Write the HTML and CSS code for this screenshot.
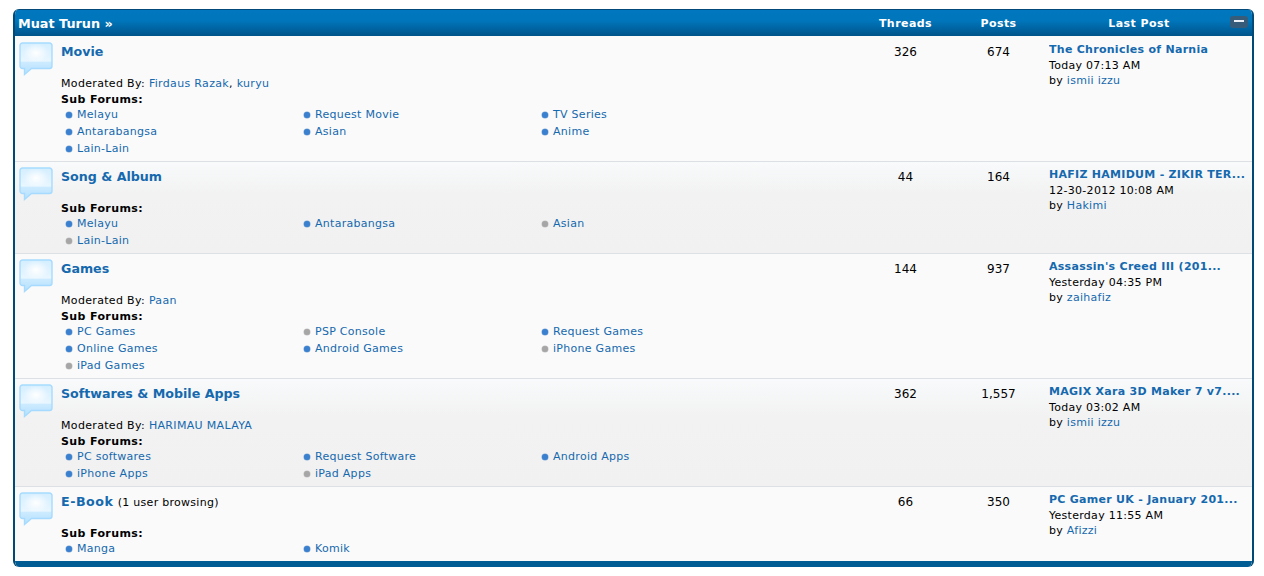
FILE: index.html
```html
<!DOCTYPE html>
<html lang="ms">
<head>
  <meta charset="UTF-8">
  <meta name="viewport" content="width=device-width, initial-scale=1">
  <title>Muat Turun</title>
  <link rel="stylesheet" href="styles.css">
</head>
<body>
  <svg class="defs" width="0" height="0" aria-hidden="true">
    <defs>
      <linearGradient id="bubbleFill" x1="0" y1="0" x2="0" y2="1">
        <stop offset="0" stop-color="#d4eeff"/>
        <stop offset="0.58" stop-color="#e9f6ff"/>
        <stop offset="0.6" stop-color="#cdebff"/>
        <stop offset="1" stop-color="#b4e0ff"/>
      </linearGradient>
      <radialGradient id="bubbleGlow" cx="0.5" cy="0.38" r="0.42">
        <stop offset="0" stop-color="#fff" stop-opacity="1"/>
        <stop offset="1" stop-color="#fff" stop-opacity="0"/>
      </radialGradient>
      <symbol id="bubble" viewBox="0 0 34 34">
        <path d="M3.500 1H30.500A2.500 2.500 0 0 1 33 3.500V24A2.500 2.500 0 0 1 30.500 26.500H12.500L5.500 32.500V26.500H3.500A2.500 2.500 0 0 1 1 24V3.500A2.500 2.500 0 0 1 3.500 1Z" fill="url(#bubbleFill)" stroke="#a6dbff" stroke-width="1.4"/>
        <rect x="2" y="2" width="30" height="23.500" fill="url(#bubbleGlow)"/>
      </symbol>
    </defs>
  </svg>

  <div class="forumbox">
    <div class="head">
      <div class="head-title">Muat Turun <span class="raquo">»</span></div>
      <div class="col-num">Threads</div>
      <div class="col-num">Posts</div>
      <div class="col-last">Last Post</div>
      <span class="collapse"></span>
    </div>

    <div class="row">
      <svg class="bubble"><use href="#bubble"/></svg>
      <div class="info">
        <h2 class="name"><a href="#">Movie</a></h2>
        <div class="mods">Moderated By: <a href="#">Firdaus Razak</a>, <a href="#">kuryu</a></div>
        <div class="sub-label">Sub Forums:</div>
        <ul class="subs">
          <li><a href="#">Melayu</a></li>
          <li><a href="#">Request Movie</a></li>
          <li><a href="#">TV Series</a></li>
          <li><a href="#">Antarabangsa</a></li>
          <li><a href="#">Asian</a></li>
          <li><a href="#">Anime</a></li>
          <li><a href="#">Lain-Lain</a></li>
        </ul>
      </div>
      <div class="num">326</div>
      <div class="num">674</div>
      <div class="last">
        <a class="last-title" href="#">The Chronicles of Narnia</a>
        <div>Today 07:13 AM</div>
        <div>by <a href="#">ismii izzu</a></div>
      </div>
    </div>

    <div class="row alt">
      <svg class="bubble"><use href="#bubble"/></svg>
      <div class="info">
        <h2 class="name"><a href="#">Song &amp; Album</a></h2>
        <div class="sub-label">Sub Forums:</div>
        <ul class="subs">
          <li><a href="#">Melayu</a></li>
          <li><a href="#">Antarabangsa</a></li>
          <li class="old"><a href="#">Asian</a></li>
          <li class="old"><a href="#">Lain-Lain</a></li>
        </ul>
      </div>
      <div class="num">44</div>
      <div class="num">164</div>
      <div class="last">
        <a class="last-title" href="#">HAFIZ HAMIDUM - ZIKIR TER...</a>
        <div>12-30-2012 10:08 AM</div>
        <div>by <a href="#">Hakimi</a></div>
      </div>
    </div>

    <div class="row">
      <svg class="bubble"><use href="#bubble"/></svg>
      <div class="info">
        <h2 class="name"><a href="#">Games</a></h2>
        <div class="mods">Moderated By: <a href="#">Paan</a></div>
        <div class="sub-label">Sub Forums:</div>
        <ul class="subs">
          <li><a href="#">PC Games</a></li>
          <li class="old"><a href="#">PSP Console</a></li>
          <li><a href="#">Request Games</a></li>
          <li><a href="#">Online Games</a></li>
          <li><a href="#">Android Games</a></li>
          <li class="old"><a href="#">iPhone Games</a></li>
          <li class="old"><a href="#">iPad Games</a></li>
        </ul>
      </div>
      <div class="num">144</div>
      <div class="num">937</div>
      <div class="last">
        <a class="last-title" href="#">Assassin's Creed III (201...</a>
        <div>Yesterday 04:35 PM</div>
        <div>by <a href="#">zaihafiz</a></div>
      </div>
    </div>

    <div class="row alt">
      <svg class="bubble"><use href="#bubble"/></svg>
      <div class="info">
        <h2 class="name"><a href="#">Softwares &amp; Mobile Apps</a></h2>
        <div class="mods">Moderated By: <a href="#">HARIMAU MALAYA</a></div>
        <div class="sub-label">Sub Forums:</div>
        <ul class="subs">
          <li><a href="#">PC softwares</a></li>
          <li><a href="#">Request Software</a></li>
          <li><a href="#">Android Apps</a></li>
          <li><a href="#">iPhone Apps</a></li>
          <li class="old"><a href="#">iPad Apps</a></li>
        </ul>
      </div>
      <div class="num">362</div>
      <div class="num">1,557</div>
      <div class="last">
        <a class="last-title" href="#">MAGIX Xara 3D Maker 7 v7....</a>
        <div>Today 03:02 AM</div>
        <div>by <a href="#">ismii izzu</a></div>
      </div>
    </div>

    <div class="row end">
      <svg class="bubble"><use href="#bubble"/></svg>
      <div class="info">
        <h2 class="name"><a class="wide" href="#">E-Book</a> <span class="browsing">(1 user browsing)</span></h2>
        <div class="sub-label">Sub Forums:</div>
        <ul class="subs">
          <li><a href="#">Manga</a></li>
          <li><a href="#">Komik</a></li>
        </ul>
      </div>
      <div class="num">66</div>
      <div class="num">350</div>
      <div class="last">
        <a class="last-title" href="#">PC Gamer UK - January 201...</a>
        <div>Yesterday 11:55 AM</div>
        <div>by <a href="#">Afizzi</a></div>
      </div>
    </div>
  </div>
</body>
</html>
```

FILE: styles.css
```css
body {
  margin: 0;
  padding: 9px 10px 0 13px;
  background: #fff;
  color: #000;
  font-family: "DejaVu Sans", Verdana, sans-serif;
  font-size: 11px;
  letter-spacing: .28px;
}
a {
  color: #1569ae;
  text-decoration: none;
}
.defs {
  display: block;
}
.forumbox {
  border: 2px solid #024a76;
  border-top: 0;
  border-bottom: 0;
  border-radius: 6px;
  background: #fafafa;
  overflow: hidden;
}
.head {
  display: grid;
  grid-template-columns: 1fr 93px 93px 207px;
  align-items: center;
  position: relative;
  height: 27px;
  margin-bottom: 1px;
  background: linear-gradient(#0077be, #0076bc 40%, #00548a);
  border-top: 1px solid #034a78;
  box-sizing: border-box;
  color: #fff;
  font-weight: bold;
  letter-spacing: .45px;
}
.head-title {
  padding-left: 3px;
  font-size: 12.8px;
  letter-spacing: 0;
}
.raquo {
  font-weight: bold;
}
.col-num {
  text-align: center;
}
.col-last {
  text-align: center;
  padding-right: 19px;
}
.collapse {
  position: absolute;
  top: 6px;
  right: 4px;
  width: 18px;
  height: 12px;
  border-radius: 3px;
  background: #375c79;
}
.collapse::after {
  content: "";
  position: absolute;
  left: 4px;
  top: 4px;
  width: 10px;
  height: 2px;
  background: #e8eef3;
}
.row {
  display: grid;
  grid-template-columns: 46px 1fr 93px 93px 207px;
  border-bottom: 1px solid #dde1e6;
  background: #fafafa;
}
.row.alt {
  background: linear-gradient(#f8fafb, #f2f2f2 35%, #f1f1f1);
}
.row.end {
  border-bottom: 6px solid #005c92;
}
.bubble {
  width: 34px;
  height: 34px;
  margin: 5px 0 0 4px;
}
.info {
  padding-top: 6px;
  min-width: 0;
}
.name {
  margin: 0 0 17px;
  height: 16px;
  font-size: 12.65px;
  line-height: 18px;
  font-weight: bold;
  letter-spacing: 0;
}
.wide {
  letter-spacing: .5px;
}
.browsing {
  font-size: 11px;
  font-weight: normal;
  letter-spacing: .28px;
}
.mods {
  height: 16px;
  line-height: 16px;
  letter-spacing: .33px;
}
.sub-label {
  height: 14px;
  line-height: 15px;
  font-weight: bold;
  letter-spacing: .38px;
}
.subs {
  display: grid;
  grid-template-columns: repeat(3, 238px);
  grid-auto-rows: 17px;
  margin: 0 0 4px;
  padding: 0 0 0 5px;
  list-style: none;
}
.subs li {
  display: flex;
  align-items: center;
  gap: 5px;
}
.subs li::before {
  content: "";
  width: 6px;
  height: 6px;
  border-radius: 50%;
  background: #3a80cf;
  box-shadow: 0 0 0 .5px #7da9d6;
}
.subs li.old::before {
  background: #a6a6a6;
  box-shadow: 0 0 0 .5px #c4c4c4;
}
.num {
  padding-top: 6px;
  text-align: center;
  font-size: 12px;
  line-height: 18px;
  letter-spacing: 0;
}
.last {
  padding: 6px 4px 0;
  line-height: 15px;
  min-width: 0;
}
.last-title {
  display: block;
  font-weight: bold;
  white-space: nowrap;
  overflow: hidden;
  line-height: 14px;
  margin-bottom: 1px;
}
```
